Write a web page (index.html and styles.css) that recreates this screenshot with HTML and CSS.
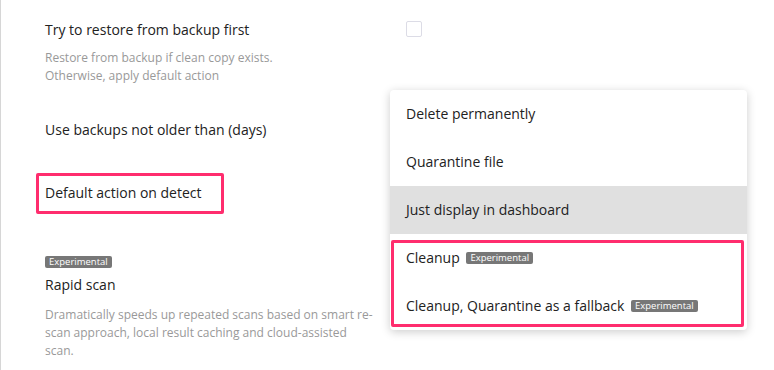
FILE: index.html
```html
<!DOCTYPE html>
<html lang="en">
<head>
    <meta charset="UTF-8">
    <title>Scan settings</title>
    <link rel="stylesheet" href="styles.css">
</head>
<body>
    <div class="page">
        <div class="setting first">
            <div class="setting-info">
                <div class="label">Try to restore from backup first</div>
                <div class="desc">Restore from backup if clean copy exists.<br>Otherwise, apply default action</div>
            </div>
            <div class="setting-control">
                <span class="checkbox"></span>
            </div>
        </div>

        <div class="setting backups">
            <div class="setting-info">
                <div class="label">Use backups not older than (days)</div>
            </div>
        </div>

        <div class="setting action">
            <div class="setting-info">
                <div class="label highlight">Default action on detect</div>
            </div>
        </div>

        <div class="setting rapid">
            <div class="setting-info">
                <span class="badge">Experimental</span>
                <div class="label">Rapid scan</div>
                <div class="desc">Dramatically speeds up repeated scans based on smart re-scan approach, local result caching and cloud-assisted scan.</div>
            </div>
        </div>

        <ul class="dropdown">
            <li>Delete permanently</li>
            <li>Quarantine file</li>
            <li class="active">Just display in dashboard</li>
            <li>Cleanup <span class="badge">Experimental</span></li>
            <li>Cleanup, Quarantine as a fallback <span class="badge">Experimental</span></li>
            <div class="dropdown-mark"></div>
        </ul>
    </div>
</body>
</html>
```

FILE: styles.css
```css
body {
    margin: 0;
    padding: 0;
    font-family: "Open Sans", "Noto Sans", sans-serif;
    color: #222;
    background-color: #fff;
}
.page {
    position: relative;
    height: 370px;
    box-sizing: border-box;
    border-left: 1px solid #d6d6d6;
    padding-left: 44px;
    overflow: hidden;
}
.setting {
    display: flex;
}
.setting-info {
    width: 330px;
}
.setting-control {
    margin-left: 31px;
}
.label {
    font-size: 14px;
    line-height: 20px;
    color: #222;
}
.desc {
    font-size: 12px;
    line-height: 18px;
    color: #999;
}
.first {
    padding-top: 20px;
}
.first .desc {
    margin-top: 9px;
}
.checkbox {
    display: block;
    width: 14px;
    height: 14px;
    margin-top: 1px;
    border: 1px solid #dcdce6;
    border-radius: 2px;
}
.backups {
    margin-top: 35px;
}
.action {
    margin-top: 33px;
}
.label.highlight {
    display: inline-block;
    margin-left: -9px;
    padding: 7px 19px 8px 6px;
    border: 3px solid #ff2d6e;
    border-radius: 2px;
}
.rapid {
    margin-top: 42px;
}
.rapid .label {
    margin-top: 7px;
}
.rapid .desc {
    margin-top: 11px;
}
.badge {
    display: inline-block;
    height: 12px;
    padding: 0 4px;
    font-size: 9.5px;
    line-height: 12px;
    color: #fff;
    background-color: #777;
    border-radius: 2px;
    vertical-align: middle;
}
.rapid .badge {
    display: block;
    width: fit-content;
}
.dropdown {
    position: absolute;
    top: 90px;
    left: 389px;
    width: 357px;
    margin: 0;
    padding: 0;
    list-style: none;
    background-color: #fff;
    border-radius: 4px;
    box-shadow: 0 2px 10px rgba(0, 0, 0, 0.2);
}
.dropdown li {
    height: 48px;
    padding-left: 16px;
    font-size: 14px;
    line-height: 48px;
    color: #222;
}
.dropdown li.active {
    background-color: #e0e0e0;
}
.dropdown .badge {
    margin-left: 3px;
    margin-top: -3px;
}
.dropdown-mark {
    position: absolute;
    top: 150px;
    left: 1px;
    width: 347px;
    height: 81px;
    border: 3px solid #ff2d6e;
    border-radius: 2px;
}
```
